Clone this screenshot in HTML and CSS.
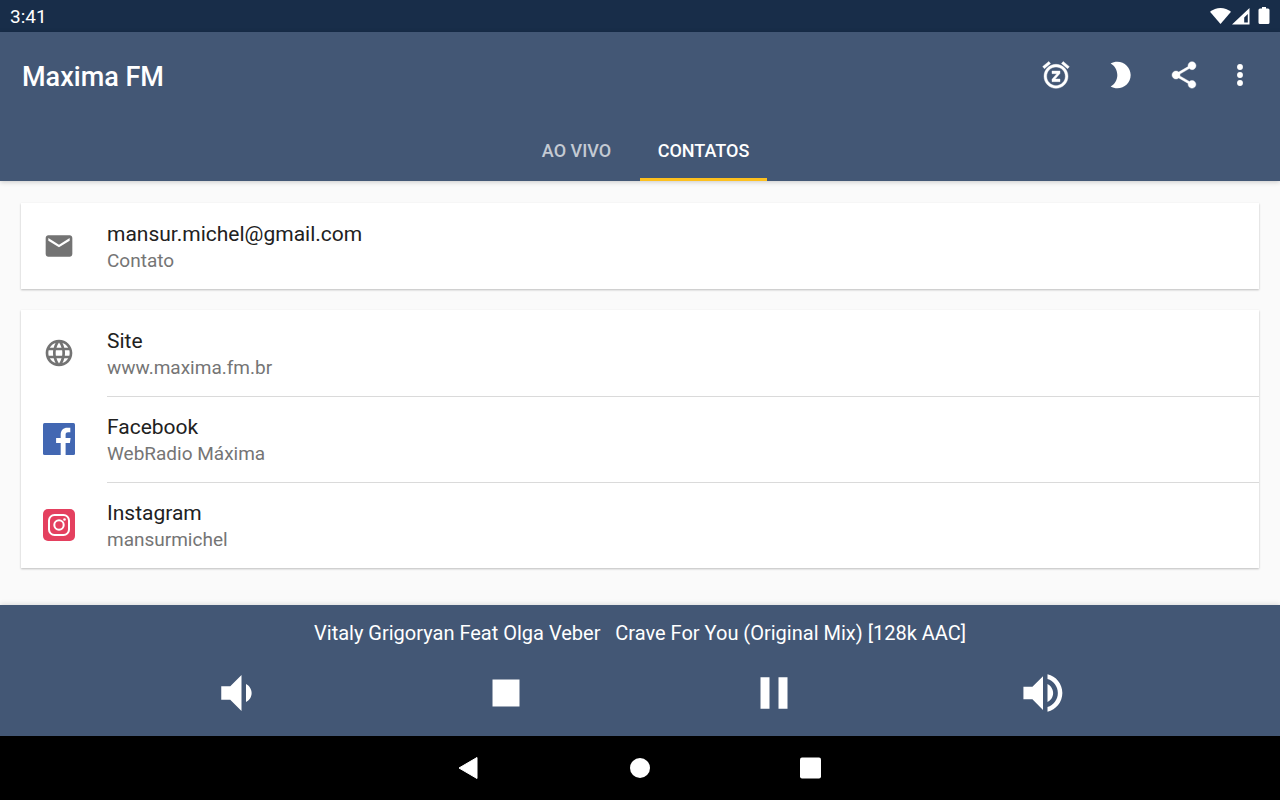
FILE: index.html
```
<!DOCTYPE html>
<html lang="pt-BR">
<head>
    <meta charset="UTF-8">
    <meta name="viewport" content="width=device-width, initial-scale=1.0">
    <title>Maxima FM</title>
    <link rel="stylesheet" href="styles.css">
</head>
<body>
    <div class="status-bar">
        <span>3:41</span>
        <svg class="status-icons" width="60" height="20" viewBox="0 0 60 20" fill="#fff">
            <path d="M0 5.800C6 .6 15 .6 21 5.800L10.500 18z"/>
            <path fill-rule="evenodd" d="M39.500 2v16.500H22zM37.800 8l-3.600 3.600V16.500h3.600z"/>
            <path d="M52 1h4v1.500h2q1.500 0 1.500 1.500v12.500q0 1.500-1.500 1.500h-8q-1.500 0-1.500-1.500V4q0-1.500 1.500-1.500h2z"/>
        </svg>
    </div>

    <header>
        <div class="toolbar">
            <h1>Maxima FM</h1>
            <div class="actions">
                <button type="button" class="action" aria-label="Soneca">
                    <svg class="icon" viewBox="0 0 24 24"><path d="M7.880 3.390L6.600 1.860 2 5.710l1.290 1.530 4.590-3.850zM22 5.720l-4.600-3.860-1.290 1.530 4.600 3.860L22 5.720zM12 4c-4.970 0-9 4.030-9 9s4.020 9 9 9c4.970 0 9-4.030 9-9s-4.030-9-9-9zm0 16c-3.870 0-7-3.130-7-7s3.130-7 7-7 7 3.130 7 7-3.130 7-7 7zm-3-9h3.630L9 15.200V17h6v-2h-3.630L15 10.800V9H9v2z" stroke="#fff" stroke-width=".3"/></svg>
                </button>
                <button type="button" class="action" aria-label="Modo noturno">
                    <svg class="icon" viewBox="0 0 24 24"><path d="M10 2c-1.820 0-3.530.5-5 1.350C7.990 5.080 10 8.300 10 12s-2.010 6.920-5 8.650C6.470 21.500 8.180 22 10 22c5.520 0 10-4.480 10-10S15.520 2 10 2z"/></svg>
                </button>
                <button type="button" class="action" aria-label="Compartilhar">
                    <svg class="icon" viewBox="0 0 24 24"><path d="M18 16.080c-.76 0-1.440.3-1.960.77L8.910 12.700c.05-.23.09-.46.09-.7s-.04-.47-.09-.7l7.050-4.110c.54.5 1.250.81 2.040.81 1.660 0 3-1.340 3-3s-1.340-3-3-3-3 1.340-3 3c0 .24.04.47.09.7L8.040 9.810C7.500 9.310 6.790 9 6 9c-1.660 0-3 1.340-3 3s1.340 3 3 3c.79 0 1.500-.31 2.040-.81l7.120 4.160c-.05.21-.08.43-.08.65 0 1.610 1.310 2.920 2.920 2.920s2.920-1.310 2.920-2.920-1.310-2.920-2.920-2.920z" stroke="#fff" stroke-width=".3"/></svg>
                </button>
                <button type="button" class="action action-more" aria-label="Mais">
                    <svg class="icon" viewBox="0 0 24 24"><circle cx="12" cy="6" r="2.200"/><circle cx="12" cy="12" r="2.200"/><circle cx="12" cy="18" r="2.200"/></svg>
                </button>
            </div>
        </div>
        <nav class="tabs">
            <a href="#" class="tab">AO VIVO</a>
            <a href="#" class="tab active">CONTATOS</a>
        </nav>
    </header>

    <main>
        <div class="card">
            <a href="#" class="row">
                <svg class="icon icon-gray" viewBox="0 0 24 24"><path d="M20 4H4c-1.100 0-1.990.9-1.990 2L2 18c0 1.100.9 2 2 2h16c1.100 0 2-.9 2-2V6c0-1.100-.9-2-2-2zm0 4l-8 5-8-5V6l8 5 8-5v2z"/></svg>
                <span class="row-text">
                    <span class="name">mansur.michel@gmail.com</span>
                    <span class="detail">Contato</span>
                </span>
            </a>
        </div>

        <div class="card">
            <a href="#" class="row">
                <svg class="icon icon-gray" viewBox="0 0 24 24"><path d="M11.990 2C6.470 2 2 6.480 2 12s4.470 10 9.990 10C17.520 22 22 17.520 22 12S17.520 2 11.990 2zm6.930 6h-2.950c-.32-1.250-.78-2.450-1.380-3.560 1.840.63 3.370 1.910 4.330 3.560zM12 4.040c.83 1.200 1.480 2.530 1.910 3.960h-3.820c.43-1.430 1.080-2.760 1.910-3.960zM4.260 14C4.100 13.360 4 12.690 4 12s.1-1.360.26-2h3.380c-.08.66-.14 1.320-.14 2s.06 1.340.14 2H4.260zm.82 2h2.950c.32 1.250.78 2.450 1.380 3.560-1.840-.63-3.370-1.900-4.330-3.560zm2.950-8H5.080c.96-1.660 2.490-2.930 4.330-3.560C8.810 5.550 8.350 6.750 8.030 8zM12 19.960c-.83-1.200-1.480-2.530-1.910-3.960h3.820c-.43 1.430-1.080 2.760-1.910 3.960zM14.340 14H9.660c-.09-.66-.16-1.320-.16-2s.07-1.350.16-2h4.680c.09.65.16 1.320.16 2s-.07 1.340-.16 2zm.25 5.560c.6-1.110 1.060-2.310 1.380-3.560h2.950c-.96 1.650-2.490 2.930-4.330 3.560zM16.360 14c.08-.66.14-1.320.14-2s-.06-1.340-.14-2h3.380c.16.64.26 1.310.26 2s-.1 1.360-.26 2h-3.380z"/></svg>
                <span class="row-text">
                    <span class="name">Site</span>
                    <span class="detail">www.maxima.fm.br</span>
                </span>
            </a>
            <a href="#" class="row">
                <svg class="icon" viewBox="0 0 32 32">
                    <rect width="32" height="32" rx="1.500" fill="#4267b2"/>
                    <path d="M17.700 32V19.900h-4.600v-4.800h4.600v-3.600C17.700 7.100 20.400 4.700 24.300 4.700c1.400 0 2.600.1 3 .1v4.400h-2.200c-2.100 0-2.500 1-2.500 2.600v3.300h5l-.7 4.800h-4.300V32z"/>
                </svg>
                <span class="row-text">
                    <span class="name">Facebook</span>
                    <span class="detail">WebRadio Máxima</span>
                </span>
            </a>
            <a href="#" class="row">
                <svg class="icon" viewBox="0 0 32 32">
                    <rect width="32" height="32" rx="5" fill="#e4405f"/>
                    <g fill="none" stroke="#fff" stroke-width="2">
                        <rect x="6" y="6" width="20" height="20" rx="5.500"/>
                        <circle cx="16" cy="16" r="4.700"/>
                    </g>
                    <circle cx="21.500" cy="10.500" r="1.300"/>
                </svg>
                <span class="row-text">
                    <span class="name">Instagram</span>
                    <span class="detail">mansurmichel</span>
                </span>
            </a>
        </div>
    </main>

    <footer class="player">
        <p class="track">Vitaly Grigoryan Feat Olga Veber &nbsp; Crave For You (Original Mix) [128k AAC]</p>
        <div class="controls">
            <button type="button" class="control" aria-label="Diminuir volume">
                <svg viewBox="0 0 24 24"><path d="M18.500 12c0-1.770-1.020-3.290-2.500-4.030v8.050c1.480-.73 2.500-2.250 2.500-4.020zM5 9v6h4l5 5V4L9 9H5z"/></svg>
            </button>
            <button type="button" class="control" aria-label="Parar">
                <svg viewBox="0 0 24 24"><path d="M6 6h12v12H6z"/></svg>
            </button>
            <button type="button" class="control" aria-label="Pausar">
                <svg viewBox="0 0 24 24"><path d="M6 19h4V5H6v14zm8-14v14h4V5h-4z"/></svg>
            </button>
            <button type="button" class="control" aria-label="Aumentar volume">
                <svg viewBox="0 0 24 24"><path d="M3.300 9.200v5.600h4l4.700 4.700V4.500L7.300 9.200H3.300zm13.200 2.800c0-1.770-1.020-3.290-2.500-4.030v8.050c1.480-.73 2.500-2.250 2.500-4.020zM14 3.700v2.060c2.700.8 4.600 3.300 4.600 6.240s-1.900 5.440-4.600 6.240v2.060c3.800-.9 6.600-4.200 6.600-8.300s-2.800-7.400-6.600-8.300z"/></svg>
            </button>
        </div>
    </footer>

    <div class="nav-bar">
        <button type="button" class="nav-button" aria-label="Voltar">
            <svg viewBox="0 0 32 32"><path d="M5 16L23 5.500V26.500z" stroke="#fff" stroke-linejoin="round"/></svg>
        </button>
        <button type="button" class="nav-button" aria-label="Início">
            <svg viewBox="0 0 32 32"><circle cx="16" cy="16" r="10"/></svg>
        </button>
        <button type="button" class="nav-button" aria-label="Recentes">
            <svg viewBox="0 0 32 32"><rect x="6" y="5.500" width="21" height="21" rx="2"/></svg>
        </button>
    </div>
</body>
</html>
```
FILE: styles.css
```
* {
    margin: 0;
    padding: 0;
    box-sizing: border-box;
}
body {
    display: flex;
    flex-direction: column;
    min-height: 100vh;
    font-family: Roboto, sans-serif;
    background-color: #fafafa;
    color: #212121;
}
button {
    border: none;
    background: none;
    cursor: pointer;
}
a {
    color: inherit;
    text-decoration: none;
}
svg {
    display: block;
    fill: #fff;
}
.icon {
    width: 32px;
    height: 32px;
    flex-shrink: 0;
}
.icon-gray {
    fill: #737373;
}
.status-bar {
    display: flex;
    justify-content: space-between;
    align-items: center;
    height: 32px;
    padding: 0 10px;
    background-color: #182d49;
    color: #fff;
    font-size: 19px;
}
header {
    position: relative;
    background-color: #435775;
    color: #fff;
    box-shadow: 0 1px 5px rgba(0, 0, 0, 0.2);
}
.toolbar {
    display: flex;
    justify-content: space-between;
    align-items: center;
    height: 86px;
    padding: 0 16px 0 22px;
}
h1 {
    padding-top: 3px;
    font-size: 27px;
    font-weight: 500;
}
.actions {
    display: flex;
}
.action {
    display: flex;
    justify-content: center;
    align-items: center;
    width: 64px;
    height: 64px;
}
.action-more {
    width: 48px;
}
.tabs {
    display: flex;
    justify-content: center;
    height: 63px;
}
.tab {
    display: flex;
    justify-content: center;
    align-items: center;
    width: 127px;
    padding-top: 4px;
    border-bottom: 3px solid transparent;
    font-size: 18px;
    font-weight: 500;
    color: rgba(255, 255, 255, 0.7);
}
.tab.active {
    border-color: #fdc01e;
    color: #fff;
}
main {
    flex: 1;
    display: flex;
    flex-direction: column;
    gap: 21px;
    padding: 22px 21px;
}
.card {
    background-color: #fff;
    box-shadow: 0 1px 2px rgba(0, 0, 0, 0.25);
}
.row {
    display: flex;
    align-items: center;
    gap: 32px;
    padding-left: 22px;
}
.row-text {
    flex: 1;
    display: flex;
    flex-direction: column;
    height: 86px;
    padding-top: 17px;
}
.row + .row .row-text {
    border-top: 1px solid #dadada;
    padding-top: 16px;
}
.name {
    font-size: 21px;
    line-height: 28px;
}
.detail {
    font-size: 19px;
    line-height: 26px;
    color: #757575;
}
.player {
    position: relative;
    background-color: #435775;
    color: #fff;
    box-shadow: 0 -1px 5px rgba(0, 0, 0, 0.12);
}
.track {
    padding-top: 14px;
    font-size: 20px;
    line-height: 28px;
    text-align: center;
}
.controls {
    display: flex;
    justify-content: center;
    padding: 5px 8% 3px;
}
.control {
    flex: 1;
    display: flex;
    justify-content: center;
    align-items: center;
    height: 81px;
}
.control svg {
    width: 54px;
    height: 54px;
}
.nav-bar {
    display: flex;
    justify-content: center;
    gap: 106px;
    height: 64px;
    background-color: #000;
}
.nav-button {
    width: 64px;
    padding: 16px;
}
```
